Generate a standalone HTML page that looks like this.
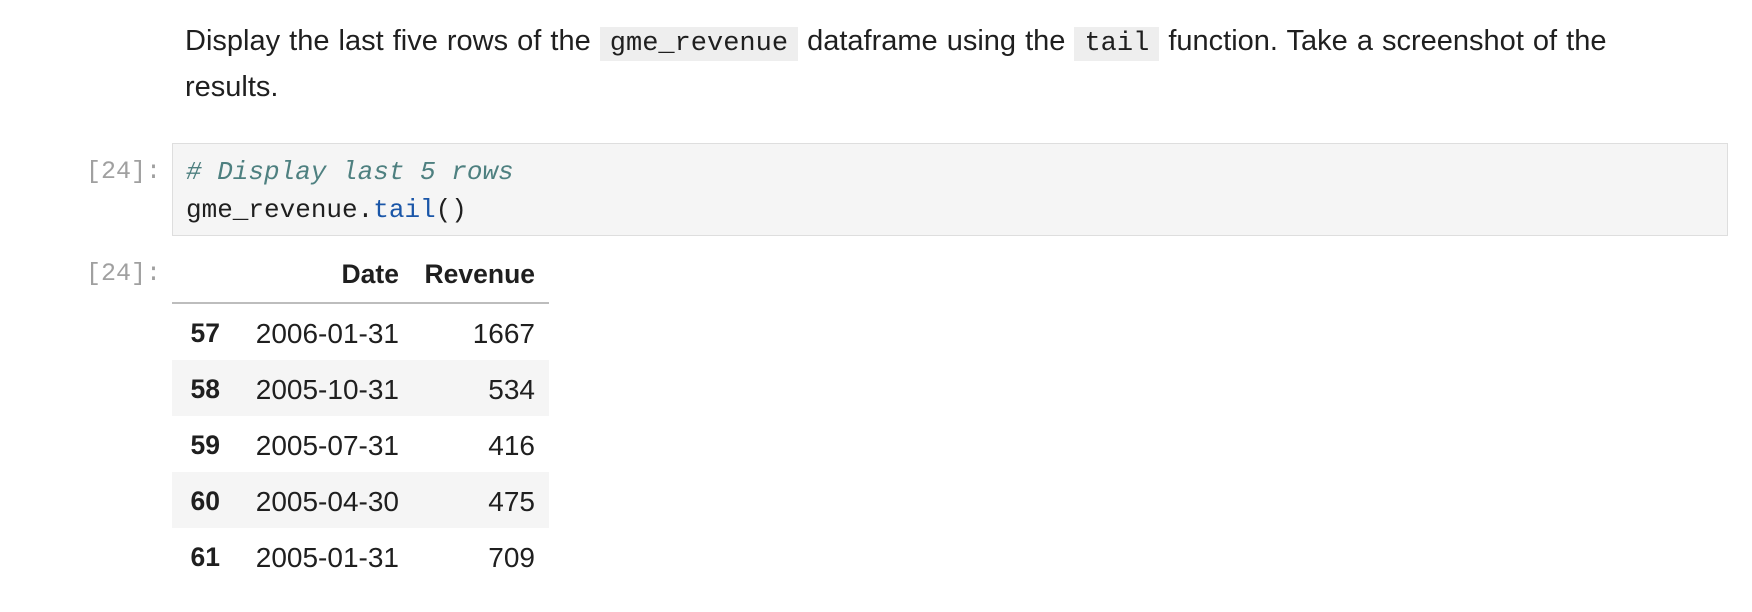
<!DOCTYPE html>
<html><head><meta charset="utf-8"><style>
body{margin:0;width:1752px;height:612px;background:#fff;position:relative;font-family:"Liberation Sans",sans-serif;color:#1f1f1f;overflow:hidden}
.p{position:absolute;left:185px;top:20px;font-size:29px;line-height:43px;width:1440px;word-spacing:1px}
.ic{font-family:"Liberation Mono",monospace;background:#eeeeee;padding:2px 10px;font-size:27px;word-spacing:0}
.prompt{position:absolute;left:86px;font-family:"Liberation Mono",monospace;font-size:25px;color:#a0a0a0}
.code{position:absolute;left:172px;top:143px;width:1556px;height:93px;background:#f5f5f5;border:1px solid #dedede;font-family:"Liberation Mono",monospace;font-size:26px;line-height:38px;box-sizing:border-box;padding:9px 0 0 13px}
.cm{color:#4e8080;font-style:italic}
.kw{color:#1a56a8}
.t{position:absolute;font-size:28px;white-space:nowrap}
.b{font-weight:bold;font-size:26.5px}
.r{text-align:right}
</style></head><body>
<div class="p">Display the last five rows of the <span class="ic">gme_revenue</span> dataframe using the <span class="ic">tail</span> function. Take a screenshot of the results.</div>
<div class="prompt" style="top:157px">[24]:</div>
<div class="code"><span class="cm"># Display last 5 rows</span><br>gme_revenue.<span class="kw">tail</span>()</div>
<div class="prompt" style="top:259px">[24]:</div>
<div style="position:absolute;left:172px;top:302px;width:377px;height:2px;background:#bdbdbd"></div>
<div style="position:absolute;left:172px;top:360px;width:377px;height:56px;background:#f5f5f5"></div>
<div style="position:absolute;left:172px;top:472px;width:377px;height:56px;background:#f5f5f5"></div>
<div class="t b r" style="right:1353px;top:259px">Date</div>
<div class="t b r" style="right:1217px;top:259px">Revenue</div>

<div class="t b r" style="right:1532px;top:318px">57</div><div class="t r" style="right:1353px;top:318px">2006-01-31</div><div class="t r" style="right:1217px;top:318px">1667</div>
<div class="t b r" style="right:1532px;top:374px">58</div><div class="t r" style="right:1353px;top:374px">2005-10-31</div><div class="t r" style="right:1217px;top:374px">534</div>
<div class="t b r" style="right:1532px;top:430px">59</div><div class="t r" style="right:1353px;top:430px">2005-07-31</div><div class="t r" style="right:1217px;top:430px">416</div>
<div class="t b r" style="right:1532px;top:486px">60</div><div class="t r" style="right:1353px;top:486px">2005-04-30</div><div class="t r" style="right:1217px;top:486px">475</div>
<div class="t b r" style="right:1532px;top:542px">61</div><div class="t r" style="right:1353px;top:542px">2005-01-31</div><div class="t r" style="right:1217px;top:542px">709</div>
</body></html>
